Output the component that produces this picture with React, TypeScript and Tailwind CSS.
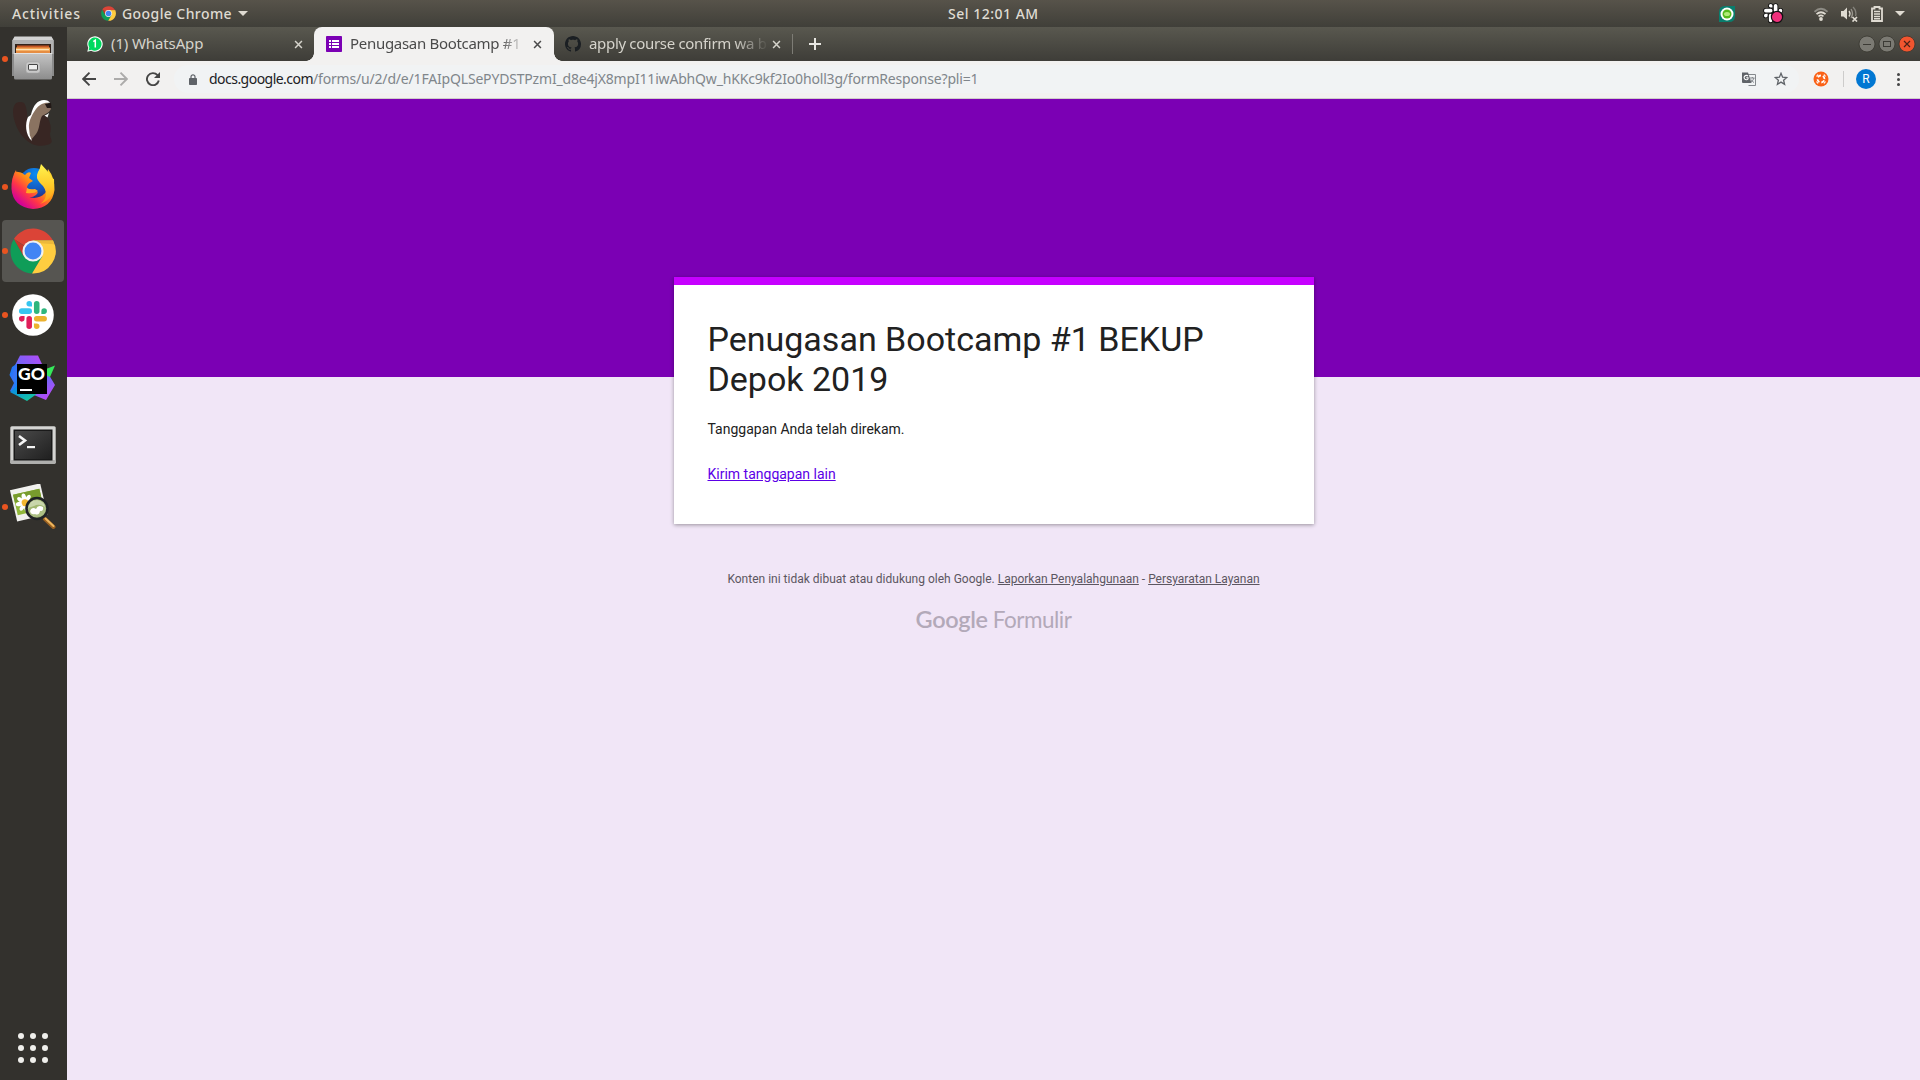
import type { ReactNode } from 'react';

function ChromeLogo({ className }: { className: string }) {
  return (
    <svg viewBox="0 0 48 48" className={className}>
      <path d="M24 24 L4.1 11.5 A23.5 23.5 0 0 1 44.6 12.8 L24 12.8 Z" fill="#DB4437" />
      <path d="M4.1 11.5 A23.5 23.5 0 0 0 23 47.5 L34 29.5 L24 24 L14.3 29.6 Z" fill="#0F9D58" />
      <path d="M44.9 13 A23.5 23.5 0 0 1 23 47.5 L33.7 29.6 L24 24 L24 13 Z" fill="#FFCD40" />
      <path d="M4.1 11.5 L14.3 29.6 L17 20 Z" fill="#C53929" />
      <path d="M24 13 H44.9 L46 17 L31 16 Z" fill="#EDB93A" />
      <circle cx="24" cy="24" r="11" fill="#F1F1F1" />
      <circle cx="24" cy="24" r="8.8" fill="#4285F4" />
    </svg>
  );
}

function FilesIcon() {
  return (
    <svg viewBox="0 0 42 44" className="-mt-0.5 h-11 w-[42px]">
      <defs>
        <linearGradient id="cab" x1="0" y1="0" x2="0" y2="1">
          <stop offset="0" stopColor="#C4C4C4" />
          <stop offset="1" stopColor="#8C8C8C" />
        </linearGradient>
      </defs>
      <path d="M2.5 1 H39.5 L42 4.500 V40 H0 V4.500 Z" fill="#8B8B8B" />
      <path d="M2.500 0.500 H39.500 L41.500 4.500 H0.500 Z" fill="#D2D2D2" />
      <rect x="0.500" y="4" width="41" height="14" fill="#B2B2B2" />
      <rect x="3" y="8" width="36" height="11" fill="#33231B" />
      <rect x="5" y="9.500" width="32" height="2.500" fill="#C65622" />
      <rect x="4" y="11.500" width="34" height="7" fill="#F2A453" />
      <rect x="4" y="13" width="33" height="1.200" fill="#FFE3B8" />
      <rect x="4" y="15.500" width="34" height="1" fill="#D97733" />
      <path d="M2 17.500 H40 V42 Q40 43.500 38.500 43.500 H3.500 Q2 43.500 2 42 Z" fill="url(#cab)" />
      <rect x="2" y="17" width="38" height="1" fill="#E2E2E2" />
      <rect x="14" y="26" width="14" height="11" rx="2.500" fill="#C9C9C9" stroke="#A0A0A0" strokeWidth="0.500" />
      <rect x="16.500" y="28.500" width="9" height="5.500" rx="0.500" fill="#EEEEEE" stroke="#454545" />
    </svg>
  );
}

function BeaverIcon() {
  return (
    <svg viewBox="0 0 40 48" className="-mt-px h-12 w-10">
      <path d="M6 3 C0 4 -1 12 1 20 C4 32 10 40 19 45 C25 48 35 47 38 44 C40 42 37 39 37 35 C39 28 37 22 33 16 L24 8 L18 18 L14 26 C15 18 14 8 11 4 Q9 2.500 6 3 Z" fill="#382623" />
      <path d="M21 10 C24 4 30 2 35 3.500 L38 10 C36 14 32 15 29 17 C26 22 27 30 23 35 L18 41 C14 32 14 22 18 15 Z" fill="#8A7361" />
      <path d="M18 16 C20 6 25 1 31 1 C34 1 36 2 37 4 C31 3 26 6 23 10 C20 14 15 22 16 29 Q16 36 19 42 C12 36 12 24 15 18 Z" fill="#FFFFFF" />
      <path d="M32 5 L38 4 L38.500 9 L34 9 Z" fill="#211816" />
      <path d="M36 14 L34.500 18.500 L31.500 16.500 L34 15.500 Z" fill="#FFFFFF" />
    </svg>
  );
}

function FirefoxIcon() {
  return (
    <svg viewBox="0 0 44 46" className="h-[46px] w-11">
      <defs>
        <linearGradient id="fox" x1="0.850" y1="0.150" x2="0.150" y2="0.850">
          <stop offset="0" stopColor="#FFD52E" />
          <stop offset="0.400" stopColor="#FF8B16" />
          <stop offset="0.680" stopColor="#FF3647" />
          <stop offset="1" stopColor="#D2009A" />
        </linearGradient>
        <linearGradient id="foxtail" x1="0" y1="0" x2="0" y2="1">
          <stop offset="0" stopColor="#FFF44F" />
          <stop offset="0.550" stopColor="#FFC928" />
          <stop offset="1" stopColor="#FF9615" />
        </linearGradient>
        <radialGradient id="globe" cx="0.550" cy="0.200" r="0.900">
          <stop offset="0" stopColor="#0A8DF2" />
          <stop offset="0.600" stopColor="#1656BD" />
          <stop offset="1" stopColor="#30236D" />
        </radialGradient>
      </defs>
      <path d="M5 6 L6 12 Q10 8 14 10 L18 7 L18 12 L36 10 L37 5 Q44 14 43.500 26 Q41 44 22 45 Q2 43 0.500 25 Q0 14 5 6 Z" fill="url(#fox)" />
      <circle cx="23" cy="19" r="15" fill="url(#globe)" />
      <path d="M4 8 Q9 7 14 11 Q17 7 20 9 L18 14 L22 17 Q17 19 16 23 Q17 28 24 27 Q29 27 25 31 Q20 35 14 32 Q22 39 31 33 Q40 26 36 13 L43 15 Q44 30 36 39 Q24 48 11 41 Q-3 29 4 8 Z" fill="url(#fox)" />
      <path d="M30 0 Q29 5 27 8 Q24 14 29 19 Q35 24 35 31 Q34 37 29 40 Q43 35 43 21 Q42 12 30 0 Z" fill="url(#foxtail)" />
      <path d="M16 24 Q19 26 24 25 L27 27 Q23 30 15 29 Z" fill="#FFAA22" />
    </svg>
  );
}

function SlackMark({ mono = false }: { mono?: boolean }) {
  const c = mono ? ['#fff', '#fff', '#fff', '#fff'] : ['#36C5F0', '#2EB67D', '#ECB22E', '#E01E5A'];
  return (
    <>
      <g fill={c[0]}>
        <path d="M19.700 0 a5.300 5.300 0 1 0 0 10.600 h5.300 V5.300 A5.300 5.300 0 0 0 19.700 0" />
        <rect x="0" y="14.200" width="25" height="10.700" rx="5.350" />
      </g>
      <g fill={c[1]}>
        <path d="M53.800 19.500 a5.300 5.300 0 1 0 -10.700 0 v5.400 h5.300 a5.300 5.300 0 0 0 5.400 -5.400" />
        <rect x="28.800" y="0" width="10.700" height="25" rx="5.350" />
      </g>
      <g fill={c[2]}>
        <path d="M34.100 54 a5.300 5.300 0 1 0 0 -10.700 h-5.300 v5.400 a5.300 5.300 0 0 0 5.300 5.300" />
        <rect x="28.800" y="29" width="25" height="10.700" rx="5.350" />
      </g>
      <g fill={c[3]}>
        <path d="M0 34.400 a5.300 5.300 0 1 0 10.700 0 V29 H5.300 A5.300 5.300 0 0 0 0 34.400" />
        <rect x="14.300" y="29" width="10.700" height="25" rx="5.350" />
      </g>
    </>
  );
}

function SlackIcon() {
  return (
    <svg viewBox="0 0 42 42" className="size-[42px]">
      <circle cx="21" cy="21" r="20.800" fill="#fff" />
      <g transform="translate(7 7) scale(0.519)"><SlackMark /></g>
    </svg>
  );
}

function GoLandIcon() {
  return (
    <div className="relative mb-0.5 mr-0.5 h-[46px] w-[46px]">
      <svg viewBox="0 0 46 46" className="size-[46px]">
        <defs>
          <linearGradient id="goa" x1="0" y1="0" x2="1" y2="1">
            <stop offset="0" stopColor="#087CFA" />
            <stop offset="0.500" stopColor="#3B72F5" />
            <stop offset="1" stopColor="#078EFC" />
          </linearGradient>
          <linearGradient id="gob" x1="0" y1="1" x2="1" y2="0">
            <stop offset="0" stopColor="#2F7BFA" />
            <stop offset="1" stopColor="#B74AF7" />
          </linearGradient>
          <linearGradient id="god" x1="0" y1="0" x2="0.600" y2="1">
            <stop offset="0" stopColor="#2389FA" />
            <stop offset="1" stopColor="#B74AF7" />
          </linearGradient>
          <linearGradient id="goc" x1="0" y1="0" x2="1" y2="1">
            <stop offset="0" stopColor="#087CFA" />
            <stop offset="1" stopColor="#18D68C" />
          </linearGradient>
        </defs>
        <path d="M11 0.500 H29 L33 9 V30 H8 L1 20 Z" fill="url(#gob)" />
        <path d="M3 12 L9 8 V38 L1 36 L5 28 L0.500 20 Z" fill="url(#goa)" />
        <path d="M34 14 L40 20 L46 30 L37 45 L20 38 L34 30 Z" fill="url(#god)" />
        <path d="M1 37 L9 30 L29 38 L18 46 Z" fill="url(#goc)" />
        <path d="M37 14 L46 10.500 L41 22 L37 20 Z" fill="#35E95B" />
        <rect x="8" y="9" width="30" height="30" fill="#000" />
        <rect x="11" y="34" width="12" height="2" fill="#fff" />
      </svg>
      <span className="absolute left-[9px] top-[10px] font-[Lato] text-[17.5px] font-black leading-[18px] text-white">GO</span>
    </div>
  );
}

function TerminalIcon() {
  return (
    <svg viewBox="0 0 46 38" className="h-[38px] w-[46px]">
      <defs>
        <linearGradient id="term" x1="0" y1="0" x2="1" y2="1">
          <stop offset="0" stopColor="#4A4A4A" />
          <stop offset="0.500" stopColor="#353535" />
          <stop offset="1" stopColor="#202020" />
        </linearGradient>
      </defs>
      <rect x="0.300" y="0.300" width="45.400" height="37.400" rx="1.500" fill="#D5D5D3" />
      <rect x="0.300" y="34" width="45.400" height="3.700" rx="1.500" fill="#AFAFAD" />
      <rect x="3.500" y="3.500" width="39" height="31" fill="#191919" />
      <rect x="5" y="5" width="36" height="28" fill="url(#term)" />
      <path d="M9 10 L15 14.500 L9 19" fill="none" stroke="#F4F4F4" strokeWidth="2.600" />
      <rect x="17" y="20" width="8" height="2.200" fill="#F4F4F4" />
    </svg>
  );
}

function ImageViewerIcon() {
  return (
    <svg viewBox="0 0 46 46" className="size-[46px]">
      <g transform="rotate(-13 16 18)">
        <rect x="3" y="3" width="31" height="32" fill="#F1F1EE" />
        <rect x="5" y="8" width="27" height="21" fill="#91B83A" />
        <rect x="5" y="8" width="27" height="8" fill="#789C2D" />
        <g fill="#fff">
          <ellipse cx="15" cy="13" rx="2.200" ry="4" />
          <ellipse cx="15" cy="24" rx="2.200" ry="4" />
          <ellipse cx="9.500" cy="18.500" rx="4" ry="2.200" />
          <ellipse cx="20.500" cy="18.500" rx="4" ry="2.200" />
          <ellipse cx="11" cy="14.500" rx="2" ry="3.500" transform="rotate(-45 11 14.500)" />
          <ellipse cx="19" cy="14.500" rx="2" ry="3.500" transform="rotate(45 19 14.500)" />
          <ellipse cx="11" cy="22.500" rx="2" ry="3.500" transform="rotate(45 11 22.500)" />
        </g>
        <circle cx="15" cy="18.500" r="3.500" fill="#F3B72F" />
      </g>
      <path d="M35 35 L43.500 43" stroke="#9B6121" strokeWidth="4" strokeLinecap="round" />
      <path d="M35.500 34.500 L43.500 42" stroke="#EDB65F" strokeWidth="2" strokeLinecap="round" />
      <circle cx="27" cy="24.500" r="10.500" fill="#A3B877" fillOpacity="0.900" stroke="#202326" strokeWidth="2.600" />
      <path d="M18 24 Q20 16 27 16 Q34 17 35 23 Q29 19 24 22 Z" fill="#EFF3E4" fillOpacity="0.500" />
      <path d="M20 27 Q22 22 26 25 Q28 20 33 23 Q34 27 30 27 Q29 32 25 30 Q21 31 20 27 Z" fill="#fff" />
    </svg>
  );
}

function DockItem({ children, running = false, active = false }: { children: ReactNode; running?: boolean; active?: boolean }) {
  return (
    <div className={active ? 'relative flex h-[62px] w-[62px] items-center justify-center rounded bg-[#565551]' : 'relative flex h-[62px] w-[62px] items-center justify-center'}>
      {running && <span className="absolute left-0 top-7 size-1.5 rounded-full bg-[#E95420]" />}
      {children}
    </div>
  );
}

function Close({ className }: { className: string }) {
  return (
    <svg viewBox="0 0 10 10" className={className}>
      <path d="M1.200 1.200 L8.800 8.800 M8.800 1.200 L1.200 8.800" stroke="currentColor" strokeWidth="1.700" fill="none" />
    </svg>
  );
}

function TopBar() {
  return (
    <header className="relative flex h-[27px] shrink-0 items-center bg-linear-to-b from-[#57534A] to-[#403F39] text-[14px] font-medium leading-[26px] text-[#DFDBD2]">
      <span className="ml-3 w-[88.5px] tracking-[0.85px]">Activities</span>
      <ChromeLogo className="size-[15px]" />
      <span className="ml-[6.5px] w-[116px] whitespace-nowrap tracking-[0.42px]">Google Chrome</span>
      <svg viewBox="0 0 10 5" className="h-[5px] w-2.5"><path d="M0 0 H10 L5 5 Z" fill="#DFDBD2" /></svg>
      <span className="ml-[700px] w-[92px] whitespace-nowrap tracking-[0.5px]">Sel 12:01 AM</span>
      <div className="ml-auto flex items-center">
        <svg viewBox="0 0 16 16" className="size-4">
          <path d="M6 0 H16 V10 Q16 16 10 16 H0 V6 Q0 0 6 0 Z" fill="#0A7D6D" />
          <circle cx="8" cy="8" r="6.500" fill="#fff" />
          <circle cx="8" cy="8" r="4.500" fill="#56B91D" />
          <ellipse cx="8" cy="8" rx="3" ry="2" fill="#B3EA79" />
        </svg>
        <svg viewBox="0 0 21 21" className="ml-7 size-[21px]">
          <g transform="translate(1 1) scale(0.340)" stroke="#111" strokeWidth="5" paintOrder="stroke"><SlackMark mono /></g>
          <circle cx="14" cy="14" r="5.600" fill="#F0307C" stroke="#111" strokeWidth="1.200" />
        </svg>
        <svg viewBox="0 0 14 14" className="ml-[30px] size-3.5" fill="none">
          <path d="M0.500 4.800 Q7 -1.200 13.500 4.800" stroke="#8D8B84" strokeWidth="1.800" />
          <path d="M2.500 7.200 Q7 3.200 11.500 7.200" stroke="#DFDBD2" strokeWidth="1.800" />
          <path d="M4.500 9.400 Q7 7.300 9.500 9.400" stroke="#DFDBD2" strokeWidth="1.500" />
          <circle cx="7" cy="12" r="1.900" fill="#DFDBD2" />
        </svg>
        <svg viewBox="0 0 17 16" className="ml-[13px] h-4 w-[17px]" fill="none">
          <path d="M0 5 H2.500 L6 1.500 V13.500 L2.500 10.500 H0 Z" fill="#DFDBD2" />
          <path d="M8 5 Q10 7.700 8 10.500" stroke="#DFDBD2" strokeWidth="1.300" />
          <path d="M10 3 Q13 7.500 10 12" stroke="#99968E" strokeWidth="1.300" />
          <path d="M12 1 Q16 5 14.500 10" stroke="#84827B" strokeWidth="1.300" />
          <path d="M11.500 11 L16 15.500 M16 11 L11.500 15.500" stroke="#DFDBD2" strokeWidth="1.700" />
        </svg>
        <svg viewBox="0 0 12 16" className="ml-[13px] h-4 w-3">
          <path d="M1 2.500 H3.500 V1 H8.500 V2.500 H11 V15 H1 Z" fill="none" stroke="#DFDBD2" strokeWidth="1.800" />
          <path d="M3 5.500 H9 M3 8 H9 M3 10.500 H9 M3 12.800 H9" stroke="#DFDBD2" strokeWidth="1.400" />
        </svg>
        <svg viewBox="0 0 10 5" className="ml-3 mr-[15px] h-[5px] w-2.5"><path d="M0 0 H10 L5 5 Z" fill="#DFDBD2" /></svg>
      </div>
    </header>
  );
}

function Dock() {
  return (
    <nav className="flex w-[67px] shrink-0 flex-col items-start gap-0.5 bg-[#33312D] pl-0.5 pt-px">
      <DockItem running><FilesIcon /></DockItem>
      <DockItem><BeaverIcon /></DockItem>
      <DockItem running><FirefoxIcon /></DockItem>
      <DockItem running active><ChromeLogo className="size-[46px]" /></DockItem>
      <DockItem running><SlackIcon /></DockItem>
      <DockItem><GoLandIcon /></DockItem>
      <DockItem><div className="pt-1"><TerminalIcon /></div></DockItem>
      <DockItem running><ImageViewerIcon /></DockItem>
      <div className="mb-[17px] ml-4 mt-auto grid grid-cols-3 gap-1.5">
        {Array.from({ length: 9 }, (_, i) => <span key={i} className="size-1.5 rounded-full bg-[#F0EFEC]" />)}
      </div>
    </nav>
  );
}

function TabStrip() {
  return (
    <div className="flex h-[34px] shrink-0 items-center bg-linear-to-b from-[#59584F] to-[#3E3D38] text-[15px] leading-8">
      <div className="flex h-full w-[247px] items-center pl-5 text-[#D5D3CB]">
        <svg viewBox="0 0 16 16" className="size-4">
          <path d="M0.300 15.700 L1.300 11.800 A7.700 7.700 0 1 1 4.200 14.700 Z" fill="#fff" />
          <path d="M1.500 14.500 L2.300 11.500 A6.600 6.600 0 1 1 4.500 13.700 Z" fill="#00D95F" />
          <path d="M6.300 5.600 L8.300 4.200 V11.500" fill="none" stroke="#fff" strokeWidth="1.500" />
        </svg>
        <span className="mb-0.5 ml-2 w-[183px] whitespace-nowrap tracking-[-0.12px]">(1) WhatsApp</span>
        <Close className="size-[9px]" />
      </div>
      <div className="relative flex h-full w-60 items-center rounded-t-lg bg-[#F2F1F0] pl-3 text-[#4B4B4B]">
        <span className="absolute -left-2 bottom-0 size-2 bg-[radial-gradient(circle_at_0_0,transparent_7.5px,#F2F1F0_8px)]" />
        <span className="absolute -right-2 bottom-0 size-2 bg-[radial-gradient(circle_at_100%_0,transparent_7.5px,#F2F1F0_8px)]" />
        <svg viewBox="0 0 16 16" className="size-4">
          <rect width="16" height="16" rx="0.800" fill="#7B00B4" />
          <path d="M3 4 H5 V6 H3 Z M6 4 H13 V6 H6 Z M3 7 H5 V9 H3 Z M6 7 H13 V9 H6 Z M3 10 H5 V12 H3 Z M6 10 H13 V12 H6 Z" fill="#fff" />
        </svg>
        <span className="mb-0.5 ml-2 w-[175px] whitespace-nowrap tracking-[-0.3px] [mask-image:linear-gradient(to_right,black_150px,transparent_175px)]">Penugasan Bootcamp #1</span>
        <Close className="ml-2 size-[9px]" />
      </div>
      <div className="flex h-full w-[238px] items-center pl-[11px] text-[#D5D3CB]">
        <svg viewBox="0 0 16 16" className="size-4">
          <path fill="#1B1F23" d="M8 0C3.580 0 0 3.580 0 8c0 3.540 2.290 6.530 5.470 7.590.4.070.55-.17.55-.38 0-.19-.01-.82-.01-1.490-2.010.37-2.530-.49-2.690-.94-.09-.23-.48-.94-.82-1.130-.28-.15-.68-.52-.01-.53.63-.01 1.080.58 1.230.82.72 1.210 1.870.87 2.330.66.07-.52.28-.87.51-1.070-1.780-.2-3.640-.89-3.640-3.950 0-.87.31-1.590.82-2.150-.08-.2-.36-1.020.08-2.120 0 0 .67-.21 2.200.82.64-.18 1.320-.27 2-.27s1.360.09 2 .27c1.530-1.040 2.200-.82 2.200-.82.44 1.100.16 1.920.08 2.120.51.56.82 1.270.82 2.150 0 3.070-1.870 3.750-3.650 3.950.29.25.54.73.54 1.480 0 1.070-.01 1.930-.01 2.200 0 .21.15.46.55.38A8.010 8.010 0 0 0 16 8c0-4.420-3.580-8-8-8Z" />
        </svg>
        <span className="mb-0.5 ml-2 w-[180px] whitespace-nowrap tracking-[-0.32px] [mask-image:linear-gradient(to_right,black_145px,transparent_180px)]">apply course confirm wa b</span>
        <Close className="ml-[3px] size-[9px]" />
      </div>
      <div className="h-5 w-px bg-[#7D7C75]" />
      <svg viewBox="0 0 12 12" className="ml-4 size-3"><path d="M6 0 V12 M0 6 H12" stroke="#E8E7E2" strokeWidth="2" /></svg>
      <div className="ml-auto mr-[5px] flex gap-1">
        <svg viewBox="0 0 16 16" className="size-4 overflow-visible"><circle cx="8" cy="8" r="8" fill="#7B7A73" stroke="#37362F" strokeWidth="0.800" /><path d="M4 8.500 H12" stroke="#3B3A34" /></svg>
        <svg viewBox="0 0 16 16" className="size-4 overflow-visible"><circle cx="8" cy="8" r="8" fill="#7B7A73" stroke="#37362F" strokeWidth="0.800" /><rect x="4.500" y="5.500" width="7" height="5" fill="none" stroke="#3B3A34" /></svg>
        <svg viewBox="0 0 16 16" className="size-4 overflow-visible"><circle cx="8" cy="8" r="8" fill="#F1552F" stroke="#37362F" strokeWidth="0.800" /><path d="M5 5 L11 11 M11 5 L5 11" stroke="#4A2117" strokeWidth="1.200" /></svg>
      </div>
    </div>
  );
}

function Toolbar() {
  return (
    <div className="flex h-[38px] shrink-0 items-center border-b border-[#CFCCCA] bg-[#F2F1F0] pb-px pl-[15px]">
      <svg viewBox="0 0 14 14" className="size-3.5" fill="none" stroke="#454545" strokeWidth="1.900"><path d="M14 7 H1.500 M7.500 0.700 L1.200 7 L7.500 13.300" /></svg>
      <svg viewBox="0 0 14 14" className="ml-[18px] size-3.5" fill="none" stroke="#ACABAA" strokeWidth="1.900"><path d="M0 7 H12.500 M6.500 0.700 L12.800 7 L6.500 13.300" /></svg>
      <svg viewBox="0 0 14 14" className="ml-[18px] size-3.5" fill="none" stroke="#454545" strokeWidth="1.900"><path d="M12.800 8.500 A6 6 0 1 1 11.500 3.200" /><path d="M14 0 V6 H8 Z" fill="#454545" stroke="none" /></svg>
      <div className="ml-[14px] flex h-7 w-[1625px] items-center rounded-full bg-[#F1F3F4] pl-[15px] text-[14px]">
        <svg viewBox="0 0 8 11" className="h-[11px] w-2"><path d="M2 4.500 V2.800 A2 2 0 0 1 6 2.800 V4.500" fill="none" stroke="#5F6368" strokeWidth="1.200" /><rect y="4" width="8" height="7" rx="0.800" fill="#5F6368" /></svg>
        <span className="mb-px ml-3 whitespace-nowrap tracking-[-0.53px] text-[#202124]">docs.google.com</span>
        <span className="mb-px whitespace-nowrap tracking-[-0.18px] text-[#80868B]">/forms/u/2/d/e/1FAIpQLSePYDSTPzmI_d8e4jX8mpI11iwAbhQw_hKKc9kf2Io0holl3g/formResponse?pli=1</span>
        <svg viewBox="0 0 14 14" className="ml-auto mr-[18px] size-3.5">
          <path d="M5 2.500 H13.500 V13.500 H6.500" fill="#F1F3F4" stroke="#85898D" />
          <path d="M0 0.500 H6 L9.500 11 H1 Q0 11 0 10 Z" fill="#5F6368" />
          <path d="M6 4.200 A2.200 2.200 0 1 0 6 7 V5.700 H4.200" fill="none" stroke="#fff" strokeWidth="1.100" />
          <path d="M8 6 H12.500 M10.300 5 V6 M12 6 Q11 9 8.500 10.500 M9 7.500 Q10 9.500 12 10.500" fill="none" stroke="#777B80" strokeWidth="0.900" />
        </svg>
        <svg viewBox="0 0 14 14" className="mr-[11px] size-3.5"><path d="M7 1.300 L8.600 5.200 L12.800 5.500 L9.600 8.200 L10.600 12.300 L7 10.100 L3.400 12.300 L4.400 8.200 L1.200 5.500 L5.400 5.200 Z" fill="none" stroke="#5F6368" strokeWidth="1.300" /></svg>
      </div>
      <svg viewBox="0 0 16 16" className="ml-[14px] size-4">
        <circle cx="8" cy="8" r="7.500" fill="#FA6218" />
        <circle cx="8" cy="8" r="3.500" fill="none" stroke="#fff" strokeWidth="1.800" strokeDasharray="3.500 2" transform="rotate(25 8 8)" />
        <path d="M3.500 5.500 L5 3.500 M11 3.500 L12.500 5.500 M12.500 10.500 L11 12.500 M5 12.500 L3.500 10.500" stroke="#fff" strokeWidth="1.200" />
      </svg>
      <div className="ml-[14px] h-4 w-px bg-[#CDCCCB]" />
      <div className="ml-3 flex size-5 items-center justify-center rounded-full bg-[#0277D2] font-[Roboto] text-[12px] leading-5 text-white">R</div>
      <div className="ml-[21px] flex flex-col gap-0.5">
        <span className="size-[3px] rounded-full bg-[#454545]" />
        <span className="size-[3px] rounded-full bg-[#454545]" />
        <span className="size-[3px] rounded-full bg-[#454545]" />
      </div>
    </div>
  );
}

function FormPage() {
  return (
    <main className="flex flex-1 flex-col items-center bg-[linear-gradient(to_bottom,#7B00B4_278px,#F1E6F7_278px)] pt-[178px] font-[Roboto]">
      <section className="h-[247px] w-[640px] border-t-8 border-[#C600FF] bg-white px-[34px] pt-[34px] shadow-[0_1px_4px_rgba(0,0,0,0.37)]">
        <h1 className="text-[34px] leading-10 text-[#212121]">Penugasan Bootcamp #1 BEKUP Depok 2019</h1>
        <p className="mt-5 text-[14px] leading-5 text-[#212121]">Tanggapan Anda telah direkam.</p>
        <a className="mt-[25px] block text-[14px] leading-5 text-[#5B00E6] underline">Kirim tanggapan lain</a>
      </section>
      <p className="mt-[46px] text-[12px] leading-[18px] text-[#5C5661]">
        Konten ini tidak dibuat atau didukung oleh Google. <a className="underline">Laporkan Penyalahgunaan</a> - <a className="underline">Persyaratan Layanan</a>
      </p>
      <div className="mt-[15px] flex items-baseline gap-[5px] font-[Lato] leading-8 text-[#B3A9B9]">
        <span className="text-[23.5px] font-semibold tracking-[-0.35px]">Google</span>
        <span className="text-[22.5px] tracking-[-0.5px]">Formulir</span>
      </div>
    </main>
  );
}

export default function App() {
  return (
    <div className="flex h-[1080px] w-[1920px] flex-col overflow-hidden font-['Noto_Sans',sans-serif]">
      <TopBar />
      <div className="flex min-h-0 flex-1">
        <Dock />
        <div className="flex min-w-0 flex-1 flex-col">
          <TabStrip />
          <Toolbar />
          <FormPage />
        </div>
      </div>
    </div>
  );
}
